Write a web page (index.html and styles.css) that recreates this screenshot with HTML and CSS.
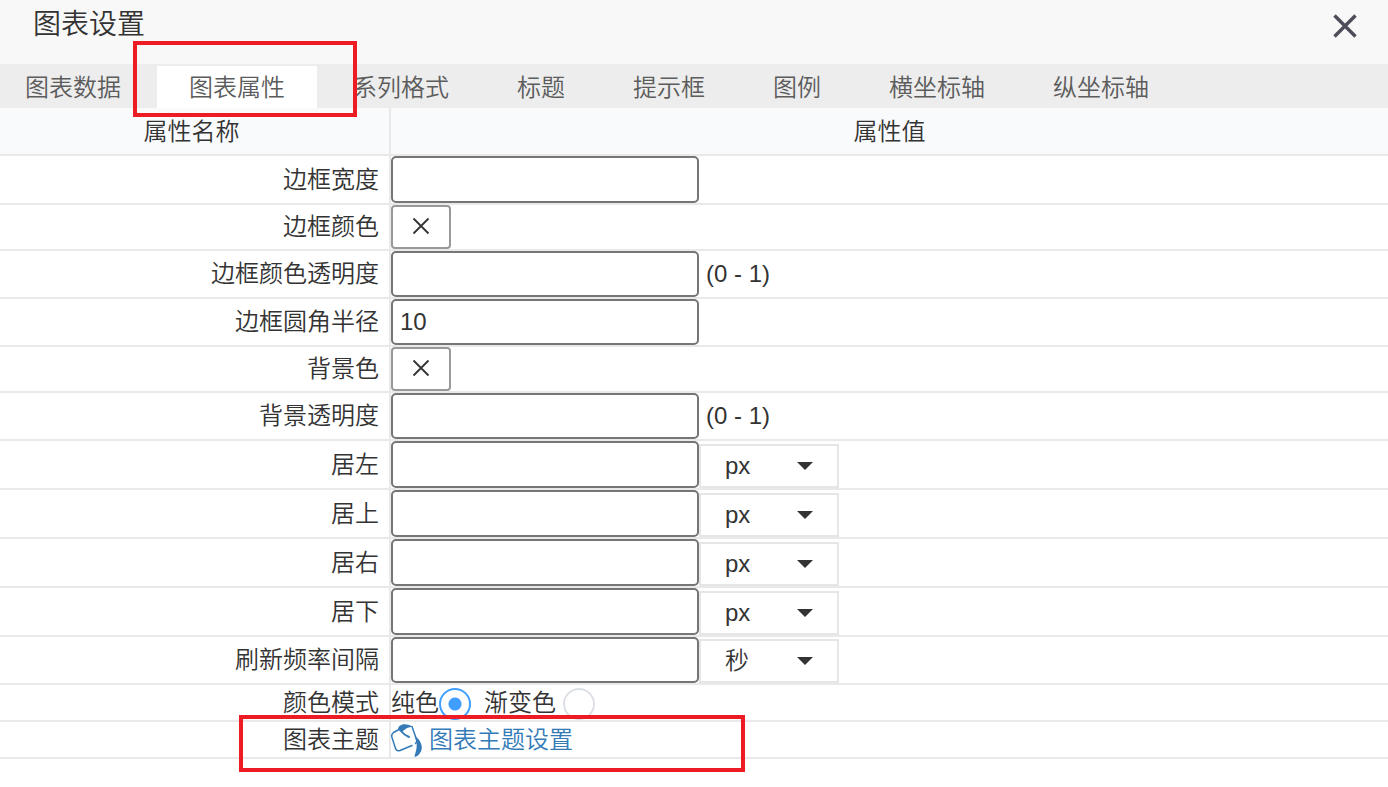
FILE: index.html
```html
<!DOCTYPE html>
<html lang="zh-CN">
<head>
<meta charset="utf-8">
<title>图表设置</title>
<link rel="stylesheet" href="styles.css">
</head>
<body>
<main class="dialog">
  <header class="dialog-header">
    <h1 class="dialog-title">图表设置</h1>
    <button class="close" type="button" aria-label="关闭">
      <svg width="24" height="24" viewBox="0 0 24 24" fill="none" stroke="#4f4c5a" stroke-width="3.400"><path d="M1.500 1.500 22.500 22.500M22.500 1.500 1.500 22.500"/></svg>
    </button>
  </header>
  <nav class="tabs">
    <button class="tab" type="button">图表数据</button>
    <button class="tab active" type="button">图表属性</button>
    <button class="tab" type="button">系列格式</button>
    <button class="tab" type="button">标题</button>
    <button class="tab" type="button">提示框</button>
    <button class="tab" type="button">图例</button>
    <button class="tab" type="button">横坐标轴</button>
    <button class="tab" type="button">纵坐标轴</button>
    <span class="highlight highlight-tab"></span>
  </nav>
  <table class="props">
    <thead>
      <tr><th class="name-col">属性名称</th><th>属性值</th></tr>
    </thead>
    <tbody>
      <tr>
        <td class="name"><label for="bw">边框宽度</label></td>
        <td><div class="field"><input class="text tall" id="bw" type="text"></div></td>
      </tr>
      <tr>
        <td class="name"><label for="bc">边框颜色</label></td>
        <td><div class="field"><button class="swatch" id="bc" type="button" aria-label="边框颜色"><svg width="18" height="18" viewBox="0 0 18 18" fill="none" stroke="#333" stroke-width="1.800"><path d="M1.500 1.500 16.500 16.500M16.500 1.500 1.500 16.500"/></svg></button></div></td>
      </tr>
      <tr>
        <td class="name"><label for="bo">边框颜色透明度</label></td>
        <td><div class="field"><input class="text" id="bo" type="text"><span class="hint">(0 - 1)</span></div></td>
      </tr>
      <tr>
        <td class="name"><label for="br">边框圆角半径</label></td>
        <td><div class="field"><input class="text" id="br" type="text" value="10"></div></td>
      </tr>
      <tr>
        <td class="name"><label for="bg">背景色</label></td>
        <td><div class="field"><button class="swatch" id="bg" type="button" aria-label="背景色"><svg width="18" height="18" viewBox="0 0 18 18" fill="none" stroke="#333" stroke-width="1.800"><path d="M1.500 1.500 16.500 16.500M16.500 1.500 1.500 16.500"/></svg></button></div></td>
      </tr>
      <tr>
        <td class="name"><label for="bgo">背景透明度</label></td>
        <td><div class="field"><input class="text" id="bgo" type="text"><span class="hint">(0 - 1)</span></div></td>
      </tr>
      <tr>
        <td class="name"><label for="left">居左</label></td>
        <td><div class="field"><input class="text tall" id="left" type="text"><span class="unit"><select aria-label="居左单位"><option>px</option></select><svg class="caret" width="16" height="8" viewBox="0 0 16 8"><path d="M0 0H16L8 8Z"/></svg></span></div></td>
      </tr>
      <tr>
        <td class="name"><label for="top">居上</label></td>
        <td><div class="field"><input class="text tall" id="top" type="text"><span class="unit"><select aria-label="居上单位"><option>px</option></select><svg class="caret" width="16" height="8" viewBox="0 0 16 8"><path d="M0 0H16L8 8Z"/></svg></span></div></td>
      </tr>
      <tr>
        <td class="name"><label for="right">居右</label></td>
        <td><div class="field"><input class="text tall" id="right" type="text"><span class="unit"><select aria-label="居右单位"><option>px</option></select><svg class="caret" width="16" height="8" viewBox="0 0 16 8"><path d="M0 0H16L8 8Z"/></svg></span></div></td>
      </tr>
      <tr>
        <td class="name"><label for="bottom">居下</label></td>
        <td><div class="field"><input class="text tall" id="bottom" type="text"><span class="unit"><select aria-label="居下单位"><option>px</option></select><svg class="caret" width="16" height="8" viewBox="0 0 16 8"><path d="M0 0H16L8 8Z"/></svg></span></div></td>
      </tr>
      <tr>
        <td class="name"><label for="freq">刷新频率间隔</label></td>
        <td><div class="field"><input class="text" id="freq" type="text"><span class="unit"><select aria-label="刷新频率单位"><option>秒</option></select><svg class="caret" width="16" height="8" viewBox="0 0 16 8"><path d="M0 0H16L8 8Z"/></svg></span></div></td>
      </tr>
      <tr>
        <td class="name">颜色模式</td>
        <td><div class="field modes">
          <label for="solid">纯色</label><input class="radio" id="solid" type="radio" name="mode" checked>
          <label class="second" for="gradient">渐变色</label><input class="radio spaced" id="gradient" type="radio" name="mode">
        </div></td>
      </tr>
      <tr>
        <td class="name theme-name">图表主题<span class="highlight highlight-theme"></span></td>
        <td><a class="theme" href="#">
          <svg width="32" height="34" viewBox="0 0 32 34" fill="none" stroke="#337ab7" stroke-width="1.500" stroke-linejoin="round" stroke-linecap="round">
            <path d="M8 6.500 2.500 9.500Q0 11.500 1 14.500L4.500 25.500Q5.500 28.500 9 27.500L21 22.500M21 3.500 25.700 17Q26 19 24.500 20.500"/>
            <path d="M7 6.500C7 2 13-1 21.500 3.500L16 5 10.500 9Z" fill="#337ab7" stroke="none"/>
            <path d="M9.500 7.500Q13 12 18 14" stroke-width="2"/>
            <path d="M23.500 13C30 16.500 33 25 29 30Q27 33.500 23.500 34C23.500 30 28.500 24 23.500 13Z" fill="#337ab7" stroke="none"/>
          </svg>
          <span>图表主题设置</span>
        </a></td>
      </tr>
    </tbody>
  </table>
</main>
</body>
</html>
```
FILE: styles.css
```css
* {
  box-sizing: border-box;
}

body {
  margin: 0;
  background: #fff;
  color: #333;
  font: 350 24px/34px "Liberation Sans", "Noto Sans CJK SC", sans-serif;
}

button,
input,
select {
  margin: 0;
  font: inherit;
  color: inherit;
}

.dialog {
  min-height: 100vh;
}

.dialog-header {
  display: flex;
  align-items: flex-start;
  justify-content: space-between;
  height: 64px;
  padding: 5px 31px 0 33px;
  background: #f8f8f8;
}

.dialog-title {
  margin: 0;
  font-size: 28px;
  line-height: 40px;
  font-weight: inherit;
}

.close {
  display: flex;
  margin-top: 9px;
  padding: 0;
  border: 0;
  background: none;
}

.tabs {
  position: relative;
  display: flex;
  gap: 4px;
  padding: 2px 0 0;
  background: #ededed;
}

.tab {
  height: 42px;
  padding: 2px 32px 0;
  border: 0;
  background: none;
  color: #5c5c5c;
  white-space: nowrap;
}

.tab:first-child {
  padding-left: 25px;
}

.tab.active {
  background: #fff;
}

.highlight {
  position: absolute;
  z-index: 1;
  border: 4px solid #ed1c24;
  pointer-events: none;
}

.highlight-tab {
  left: 133px;
  top: -23px;
  width: 224px;
  height: 76px;
}

.highlight-theme {
  left: 239px;
  top: -7px;
  width: 506px;
  height: 57px;
}

.props {
  width: 100%;
  border-collapse: separate;
  border-spacing: 0;
}

.props th,
.props td {
  padding: 0;
  border-bottom: 2px solid #e9e9e9;
  text-align: left;
  vertical-align: middle;
}

.props th {
  height: 48px;
  padding-top: 2px;
  background: #f9fafc;
  font-weight: inherit;
  text-align: center;
}

.props .name-col,
.props .name {
  width: 391px;
  border-right: 2px solid #e9e9e9;
}

.props .name-col {
  padding-right: 6px;
}

.props .name {
  padding-right: 10px;
  text-align: right;
}

.field {
  display: flex;
  align-items: center;
}

.text {
  width: 308px;
  height: 46px;
  padding: 0 7px;
  border: 2px solid #767676;
  border-radius: 5px;
  background: #fff;
}

.text.tall {
  height: 47px;
}

.swatch {
  display: flex;
  align-items: center;
  justify-content: center;
  width: 60px;
  height: 44px;
  padding: 0 0 2px;
  border: 2px solid #999;
  border-radius: 4px;
  background: #fff;
}

.hint {
  margin-left: 7px;
}

.unit {
  position: relative;
  align-self: flex-end;
}

.unit select {
  display: block;
  width: 140px;
  height: 44px;
  padding: 0 24px;
  border: 2px solid #e6e6e6;
  background: #fff;
  appearance: none;
}

.caret {
  position: absolute;
  top: 18px;
  right: 26px;
  fill: #333;
  pointer-events: none;
}

.modes {
  height: 35px;
}

.modes .second {
  margin-left: 13px;
}

.radio {
  appearance: none;
  align-self: flex-end;
  width: 32px;
  height: 32px;
  border: 2px solid #dcdfe6;
  border-radius: 50%;
}

.radio:checked {
  border-color: #409eff;
  background: radial-gradient(circle, #409eff 6px, #fff 7px);
}

.radio.spaced {
  margin-left: 7px;
}

.theme-name {
  position: relative;
}

.theme {
  display: flex;
  align-items: center;
  gap: 6px;
  height: 35px;
  color: #337ab7;
  text-decoration: none;
}
```
